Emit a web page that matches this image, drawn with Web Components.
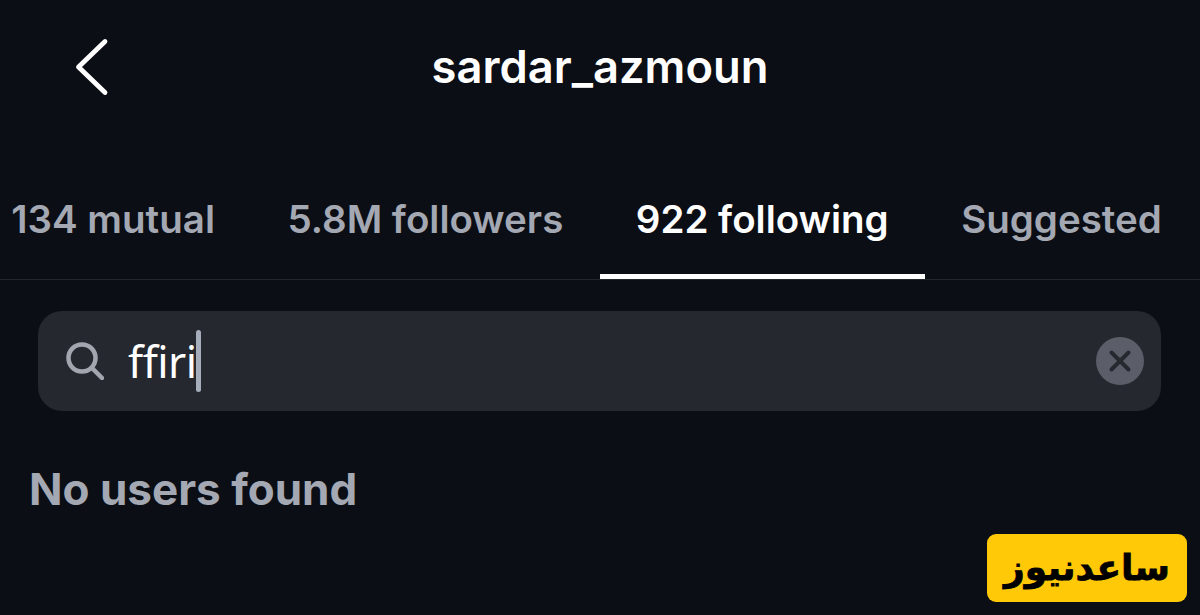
<!DOCTYPE html>
<html lang="en">
<head>
<meta charset="utf-8">
<title>sardar_azmoun</title>
<style>
html, body { margin: 0; height: 100%; background: #0b0e15; overflow: hidden; }
body { font-family: Inter, "Liberation Sans", sans-serif; }
</style>
</head>
<body>
<app-screen>
    <profile-header title-text="sardar_azmoun"></profile-header>
    <tab-bar>
        <tab-item>134 mutual</tab-item>
        <tab-item>5.8M followers</tab-item>
        <tab-item active>922 following</tab-item>
        <tab-item>Suggested</tab-item>
    </tab-bar>
    <search-box value="ffiri"></search-box>
    <empty-note>No users found</empty-note>
    <news-badge slot="badge">ساعدنیوز</news-badge>
</app-screen>

<script>
// --- screen wrapper ---
class AppScreen extends HTMLElement {
    constructor() {
        super();
        this.attachShadow({mode: 'open'});
        this.shadowRoot.innerHTML = `<style>
            :host { display: flex; flex-direction: column; position: relative; width: 1200px; height: 615px; overflow: hidden; background: #0b0e15; }
            .badge { position: absolute; left: 987px; top: 534px; }
        </style>
        <slot></slot>
        <div class="badge"><slot name="badge"></slot></div>`;
    }
}
customElements.define('app-screen', AppScreen);

// --- header with back arrow ---
class ProfileHeader extends HTMLElement {
    constructor() {
        super();
        this.attachShadow({mode: 'open'});
    }
    connectedCallback() {
        this.shadowRoot.innerHTML = `<style>
            :host { display: grid; grid-template-columns: 300px 1fr 300px; align-items: center; height: 136px; }
            .back { padding-left: 74px; display: flex; }
            svg { display: block; }
            h1 { margin: 0 0 2px; text-align: center; color: #fff; font: 600 45.300px/1 Inter, "Liberation Sans", sans-serif; }
        </style>
        <div class="back">
            <svg width="36" height="60" viewBox="0 0 36 60" fill="none" stroke="#fff" stroke-width="4.800" stroke-linecap="round" stroke-linejoin="round"><path d="M31 3.500 4.500 29 31 54.500"/></svg>
        </div>
        <h1>${this.getAttribute('title-text')}</h1>
        <div></div>`;
    }
}
customElements.define('profile-header', ProfileHeader);

// --- tabs ---
class TabBar extends HTMLElement {
    constructor() {
        super();
        this.attachShadow({mode: 'open'});
        this.shadowRoot.innerHTML = `<style>
            :host { display: flex; height: 144px; box-sizing: border-box; border-bottom: 1px solid #23262c; white-space: nowrap; }
            .row { display: flex; margin-left: -25px; }
        </style>
        <div class="row"><slot></slot></div>`;
    }
}
customElements.define('tab-bar', TabBar);

class TabItem extends HTMLElement {
    constructor() {
        super();
        this.attachShadow({mode: 'open'});
        this.shadowRoot.innerHTML = `<style>
            :host { display: flex; box-sizing: border-box; height: 143px; padding: 60px 36.250px 0; color: #a3a8b3; font: 600 38.500px/46px Inter, "Liberation Sans", sans-serif; border-bottom: 5px solid transparent; }
            :host([active]) { color: #fff; border-bottom-color: #fff; }
        </style>
        <slot></slot>`;
    }
}
customElements.define('tab-item', TabItem);

// --- search field ---
class SearchBox extends HTMLElement {
    constructor() {
        super();
        this.attachShadow({mode: 'open'});
    }
    connectedCallback() {
        this.shadowRoot.innerHTML = `<style>
            :host { display: flex; align-items: center; box-sizing: border-box; width: 1123px; height: 100px; margin: 31px 0 0 38px; padding: 0 17px 0 28px; background: #25282e; border-radius: 24px; }
            svg { display: block; flex: none; }
            .value { margin-left: 24px; color: #fff; font: 400 44px/1 "Noto Sans", "Liberation Sans", sans-serif; letter-spacing: -0.500px; }
            .caret { flex: none; width: 5px; height: 62px; margin-left: -1px; border-radius: 3px; background: #a6adba; }
            .clear { margin-left: auto; }
        </style>
        <svg width="38" height="38" viewBox="0 0 38 38" fill="none" stroke="#a3a6ae" stroke-width="4.500" stroke-linecap="round"><circle cx="16" cy="16" r="13.500"/><path d="M26 26 36 36"/></svg>
        <span class="value">${this.getAttribute('value')}</span>
        <span class="caret"></span>
        <svg class="clear" width="48" height="48" viewBox="0 0 48 48" fill="none"><circle cx="24" cy="24" r="24" fill="#5b5e68"/><path d="M15.500 15.500 32.500 32.500M32.500 15.500 15.500 32.500" stroke="#26292f" stroke-width="4" stroke-linecap="round"/></svg>`;
    }
}
customElements.define('search-box', SearchBox);

// --- empty result text ---
class EmptyNote extends HTMLElement {
    constructor() {
        super();
        this.attachShadow({mode: 'open'});
        this.shadowRoot.innerHTML = `<style>
            :host { display: block; margin: 51px 0 0 29px; color: #a3a8b3; font: 700 44px/54px Inter, "Liberation Sans", sans-serif; }
        </style>
        <slot></slot>`;
    }
}
customElements.define('empty-note', EmptyNote);

// --- watermark ---
class NewsBadge extends HTMLElement {
    constructor() {
        super();
        this.attachShadow({mode: 'open'});
        this.shadowRoot.innerHTML = `<style>
            :host { display: flex; align-items: center; justify-content: center; width: 200px; height: 68px; border-radius: 9px; background: #ffc907; color: #000; direction: rtl; font: 700 36px/1 "DejaVu Sans", sans-serif; -webkit-text-stroke: 0.800px #000; }
        </style>
        <slot></slot>`;
    }
}
customElements.define('news-badge', NewsBadge);
</script>
</body>
</html>
